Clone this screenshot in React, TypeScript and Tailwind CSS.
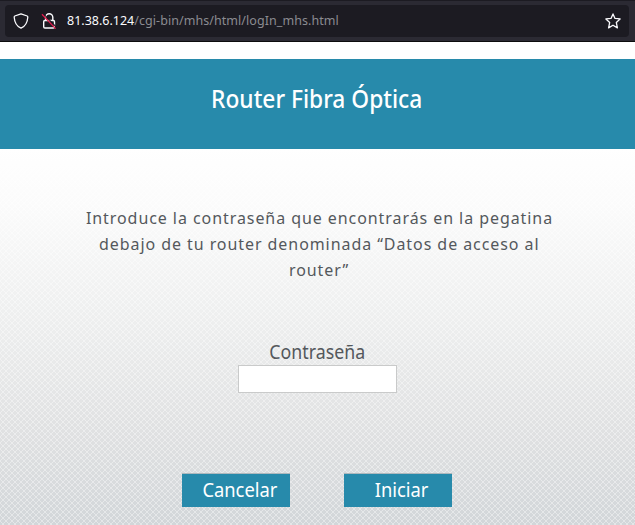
import React from "react";

function AddressBar() {
  return (
    <header className="h-[42px] border-t border-b border-t-[#1c1b22] border-b-[#0c0c0d] bg-[#2b2a33] px-[5px] pt-1">
      <div className="mr-px flex h-8 items-center rounded bg-[#1c1b22] pl-2 pr-2">
        <svg className="h-4 w-4" viewBox="0 0 16 16" fill="none" stroke="#fbfbfe" strokeWidth="1.3" strokeLinejoin="round">
          <path d="M8 .8 L14.2 3 Q14.9 3.3 14.8 4.2 C14.4 10 12.4 13.2 8 15.2 C3.6 13.2 1.6 10 1.2 4.2 Q1.1 3.3 1.8 3 Z" />
        </svg>
        <svg className="ml-3 h-4 w-4" viewBox="0 0 16 16" fill="none" stroke="#fbfbfe" strokeWidth="1.4">
          <path d="M4.6 7.5V4.3a3.6 3.6 0 0 1 7.2 0V7.5" />
          <rect x="2.7" y="7.5" width="10.8" height="7.5" rx="1.2" />
          <path d="M1.8 .2 15.8 14.7" stroke="#1c1b22" strokeWidth="1.2" />
          <path d="M1 1.2 14.6 15.6" stroke="#e21a4c" strokeWidth="1.3" />
        </svg>
        <span className="ml-[10px] whitespace-nowrap font-['Noto_Sans',sans-serif] text-[12.5px] leading-4 text-[#8b8b91]">
          <span className="text-[#fbfbfe]">81.38.6.124</span>
          <span className="tracking-[0.06px]">/cgi-bin/mhs/html/logIn_mhs.html</span>
        </span>
        <svg className="ml-auto h-4 w-4" viewBox="0 0 16 16" fill="none" stroke="#fbfbfe" strokeWidth="1.3" strokeLinejoin="round">
          <path d="m8 .9 2 4.5 5.1.5-3.8 3.5 1.1 5.5L8 12.2l-4.4 2.7 1.1-5.5L.9 5.9 6 5.4Z" />
        </svg>
      </div>
    </header>
  );
}

function Backdrop() {
  return (
    <svg className="absolute inset-0 h-full w-full" aria-hidden="true">
      <defs>
        <linearGradient id="shade" x1="0" y1="0" x2="0" y2="1">
          <stop offset="0" stopColor="#ffffff" />
          <stop offset="0.15" stopColor="#fbfbfb" />
          <stop offset="0.45" stopColor="#eeefef" />
          <stop offset="0.75" stopColor="#e0e1e2" />
          <stop offset="1" stopColor="#d2d6d9" />
        </linearGradient>
        <pattern id="lattice" width="6" height="6" patternUnits="userSpaceOnUse">
          <path d="M0 0 6 6M6 0 0 6" stroke="#fff" strokeOpacity="0.4" strokeWidth="1" />
        </pattern>
      </defs>
      <rect width="100%" height="100%" fill="url(#shade)" />
      <rect width="100%" height="100%" fill="url(#lattice)" />
    </svg>
  );
}

export default function App() {
  return (
    <div className="flex h-[525px] w-[635px] flex-col overflow-hidden bg-white font-['Noto_Sans',sans-serif] text-[#54585c]">
      <AddressBar />
      <div className="mt-[17px] flex h-[90px] shrink-0 justify-center bg-[#278aab] pr-px pt-[22px]">
        <h1 className="h-[34px] origin-center scale-x-[0.875] whitespace-nowrap text-[26px] font-medium leading-[34px] text-white">
          Router Fibra Óptica
        </h1>
      </div>
      <main className="relative flex-1">
        <Backdrop />
        <div className="relative flex flex-col items-center">
          <div className="mt-14 flex flex-col items-center whitespace-nowrap pl-[3px] text-[17px] leading-[26px] tracking-[1px]">
            <p className="scale-x-[0.94]">Introduce la contraseña que encontrarás en la pegatina</p>
            <p className="scale-x-[0.94]">debajo de tu router denominada “Datos de acceso al</p>
            <p className="scale-x-[0.94]">router”</p>
          </div>
          <label htmlFor="password" className="mt-[56px] h-[26px] scale-x-[0.935] text-[19px] leading-[26px]">
            Contraseña
          </label>
          <input id="password" type="password" className="h-7 w-[159px] border border-[#c9caca] bg-white outline-none" />
          <div className="ml-[182px] mt-[80px] flex w-[270px] justify-between self-start text-[19.5px] leading-[31px] text-white">
            <button className="h-[34px] w-[108px] border-t border-t-[#aeb8bd] bg-[#278aab] pb-0.5 pl-[7px]">
              <span className="inline-block scale-x-[0.94]">Cancelar</span>
            </button>
            <button className="h-[34px] w-[108px] border-t border-t-[#aeb8bd] bg-[#278aab] pb-0.5 pl-[8px]">
              <span className="inline-block scale-x-[0.94]">Iniciar</span>
            </button>
          </div>
        </div>
      </main>
    </div>
  );
}
